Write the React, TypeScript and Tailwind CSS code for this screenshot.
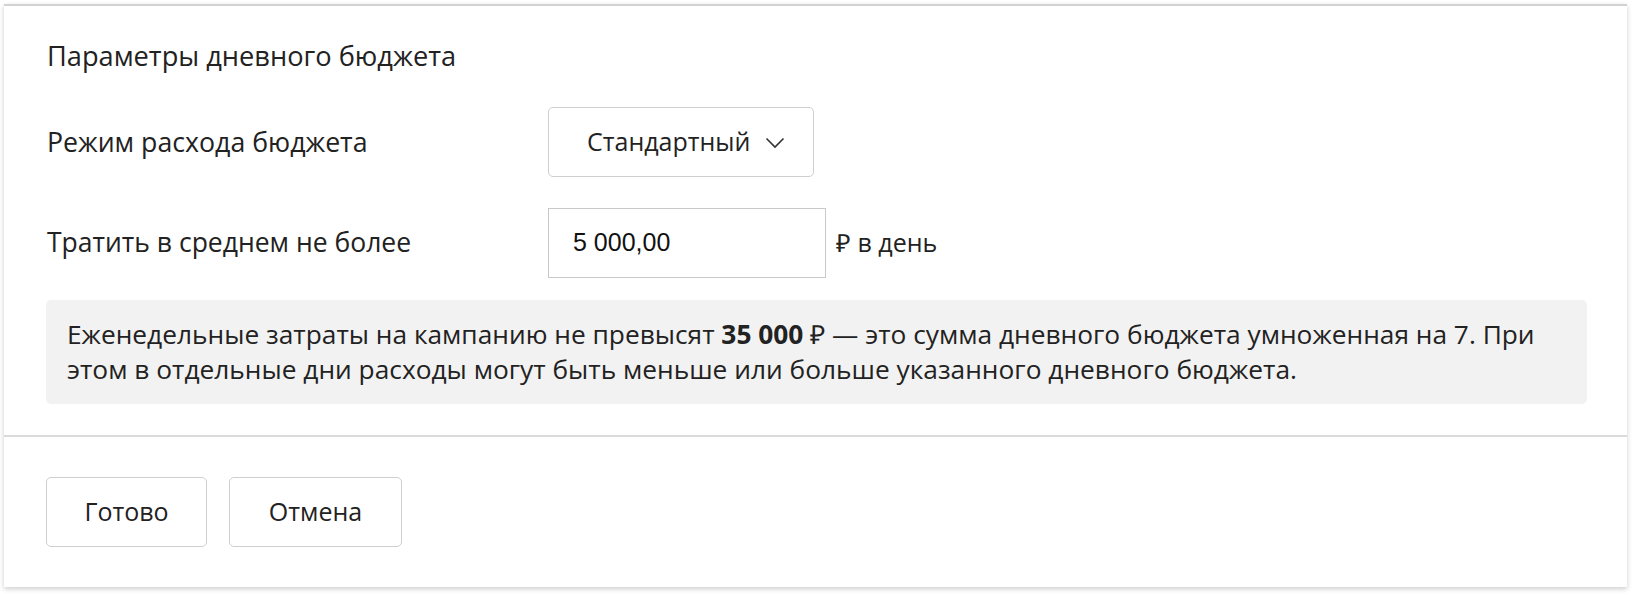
import React from "react";

function Chevron() {
  return (
    <svg width="20" height="12" viewBox="0 0 20 12" fill="none">
      <path d="M1.5 1.5 L10 10 L18.5 1.5" stroke="#333" strokeWidth="1.6" />
    </svg>
  );
}

export default function App() {
  return (
    <div className="w-[1640px] h-[600px] bg-white pt-[4px] pl-[4px] font-['Open_Sans',sans-serif] text-[#222]">
      <div className="w-[1623px] h-[583px] border-t-2 border-[#d2d2d2] bg-white shadow-[0_2px_5px_rgba(0,0,0,0.2)] flex flex-col">
        <div className="pl-[43px] pr-[36px] pt-[34px]">
          <div className="text-[27.2px] leading-[32px]">Параметры дневного бюджета</div>

          <div className="mt-[35px] flex items-center h-[70px]">
            <div className="w-[501px] text-[26.7px]">Режим расхода бюджета</div>
            <div className="w-[266px] h-[70px] border border-[#cfcfcf] rounded-[5px] flex items-center pl-[38px]">
              <span className="text-[25px]">Стандартный</span>
              <span className="ml-[15px] mt-[1px]">
                <Chevron />
              </span>
            </div>
          </div>

          <div className="mt-[31px] flex items-center h-[70px]">
            <div className="w-[501px] text-[26.5px]">Тратить в среднем не более</div>
            <div className="w-[278px] h-[70px] border border-[#c9c9c9] flex items-center pl-[24px] font-['Liberation_Sans',Arial,sans-serif] text-[25px] text-[#111]">
              5 000,00
            </div>
            <div className="ml-[10px] text-[25px]">₽ в день</div>
          </div>

          <div className="mt-[22px] w-[1541px] -ml-[1px] bg-[#f2f2f2] rounded-[5px] pl-[21px] pr-[20px] py-[17px] text-[26.3px] leading-[35px]">
            Еженедельные затраты на кампанию не превысят <b className="font-bold">35 000</b> ₽ — это сумма дневного бюджета умноженная на 7. При этом в отдельные дни расходы могут быть меньше или больше указанного дневного бюджета.
          </div>
        </div>

        <div className="mt-[31px] h-[2px] bg-[#dadada]" />

        <div className="pl-[42px] pt-[40px] flex gap-[22px]">
          <button className="w-[161px] h-[70px] border border-[#cfcfcf] rounded-[5px] bg-white text-[25px] text-[#222]">
            Готово
          </button>
          <button className="w-[173px] h-[70px] border border-[#cfcfcf] rounded-[5px] bg-white text-[25px] text-[#222]">
            Отмена
          </button>
        </div>
      </div>
    </div>
  );
}
